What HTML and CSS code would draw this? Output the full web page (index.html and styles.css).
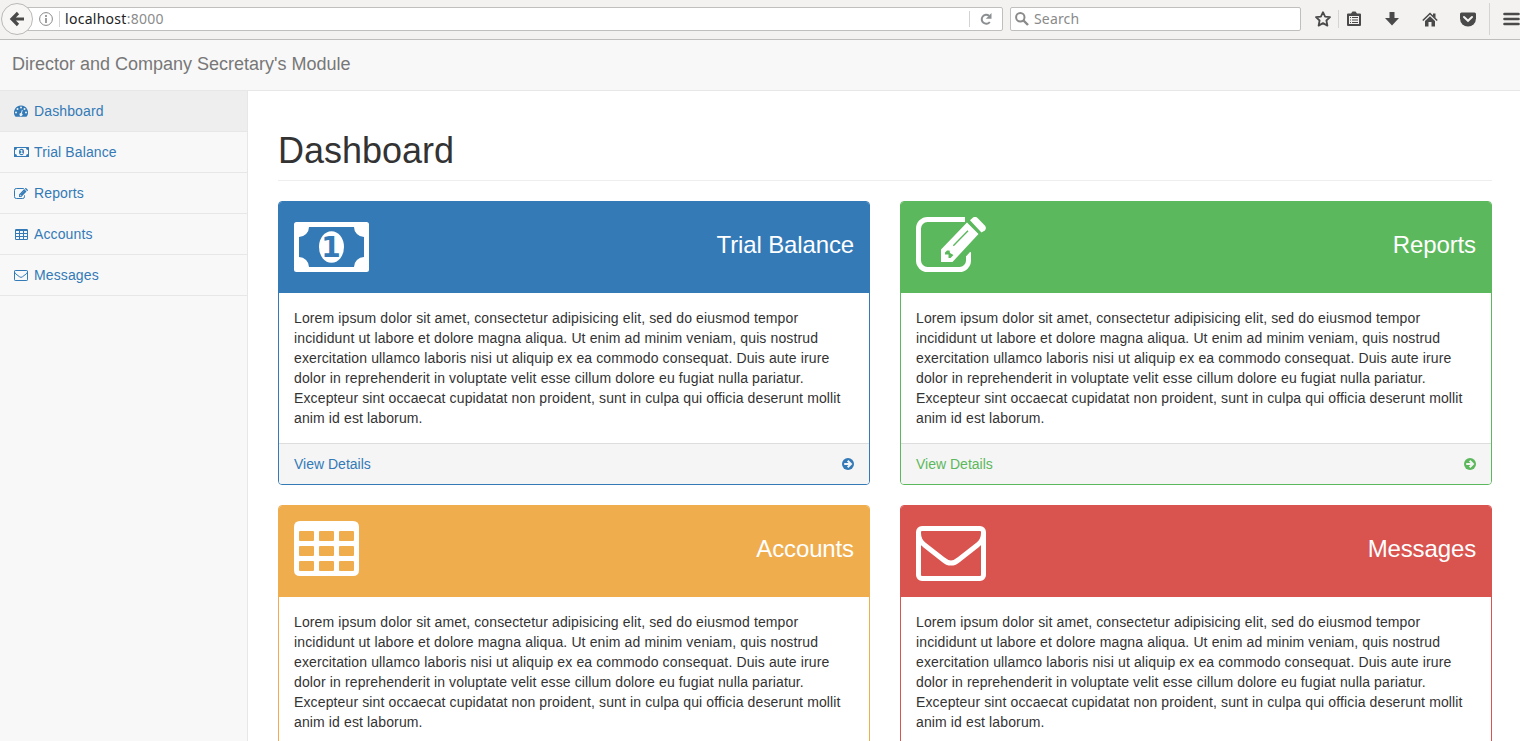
FILE: index.html
```html
<!DOCTYPE html>
<html lang="en">
<head>
<meta charset="utf-8">
<title>Dashboard</title>
<link rel="stylesheet" href="styles.css">
</head>
<body>
<svg class="sprite" aria-hidden="true">
  <symbol id="money" viewBox="0 0 75 50">
    <path fill="currentColor" fill-rule="evenodd" d="M2.500 0H72.500Q75 0 75 2.500V47.500Q75 50 72.500 50H2.500Q0 50 0 47.500V2.500Q0 0 2.500 0ZM15 5A10 10 0 0 1 5 15V35A10 10 0 0 1 15 45H60A10 10 0 0 1 70 35V15A10 10 0 0 1 60 5Z"/>
    <ellipse cx="37.500" cy="25" rx="12.500" ry="15.800" fill="currentColor"/>
  </symbol>
  <symbol id="edit" viewBox="0 0 70 55">
    <path fill="none" stroke="currentColor" stroke-width="5" d="M49 2.500H11.500A9 9 0 0 0 2.500 11.500V43.500A9 9 0 0 0 11.500 52.500H43.500A9 9 0 0 0 52.500 43.500V39"/>
    <path fill="currentColor" d="M50 39.500L54 35Q55 34.500 55 36V40H50Z"/>
    <path fill="currentColor" fill-rule="evenodd" d="M51 5.500L62.500 17L36.500 45H25V32.500ZM31 33.500L29 35.500V37.500H32.500V41H34.500L37.500 38L34 36L33.500 33.500ZM36.800 28.200L37.800 29.200L52.500 14.300L51.500 13.300Z"/>
    <path fill="currentColor" d="M54 3.200L56.500 1Q59-1.200 61.500 1L68.800 8.500Q71 11 68.800 13.500L65.500 15.500Z"/>
  </symbol>
  <symbol id="table" viewBox="0 0 65 55">
    <path fill="currentColor" fill-rule="evenodd" d="M6 0H59Q65 0 65 6V49Q65 55 59 55H6Q0 55 0 49V6Q0 0 6 0ZM6 10Q5 10 5 11V19Q5 20 6 20H19Q20 20 20 19V11Q20 10 19 10ZM26 10Q25 10 25 11V19Q25 20 26 20H39Q40 20 40 19V11Q40 10 39 10ZM46 10Q45 10 45 11V19Q45 20 46 20H59Q60 20 60 19V11Q60 10 59 10ZM6 25Q5 25 5 26V34Q5 35 6 35H19Q20 35 20 34V26Q20 25 19 25ZM26 25Q25 25 25 26V34Q25 35 26 35H39Q40 35 40 34V26Q40 25 39 25ZM46 25Q45 25 45 26V34Q45 35 46 35H59Q60 35 60 34V26Q60 25 59 25ZM6 40Q5 40 5 41V49Q5 50 6 50H19Q20 50 20 49V41Q20 40 19 40ZM26 40Q25 40 25 41V49Q25 50 26 50H39Q40 50 40 49V41Q40 40 39 40ZM46 40Q45 40 45 41V49Q45 50 46 50H59Q60 50 60 49V41Q60 40 59 40Z"/>
  </symbol>
  <symbol id="envelope" viewBox="0 0 70 55">
    <rect x="2.500" y="2.500" width="65" height="50" rx="3.500" fill="none" stroke="currentColor" stroke-width="5"/>
    <path fill="none" stroke="currentColor" stroke-width="5" d="M2.500 7C2.500 12 5 16.500 8.500 19L27 33.500Q35 40.500 43 33.500L61.500 19C65 16.500 67.500 12 67.500 7"/>
  </symbol>
  <symbol id="gauge" viewBox="0 0 14 12">
    <path fill="currentColor" fill-rule="evenodd" d="M7 .500A7 7 0 0 1 12.900 11.300Q12.600 11.700 12.200 11.700H1.800Q1.400 11.700 1.100 11.300A7 7 0 0 1 7 .500ZM2 6.500A1 1 0 0 0 2 8.500A1 1 0 0 0 2 6.500ZM3.500 3A1 1 0 0 0 3.500 5A1 1 0 0 0 3.500 3ZM7 1.500A1 1 0 0 0 7 3.500A1 1 0 0 0 7 1.500ZM10.500 3A1 1 0 0 0 10.500 5A1 1 0 0 0 10.500 3ZM12 6.500A1 1 0 0 0 12 8.500A1 1 0 0 0 12 6.500ZM7.900 4.700L7 8.100A1.500 1.500 0 1 0 7.900 8.400L8.700 4.900Z"/>
  </symbol>
  <symbol id="go" viewBox="0 0 12 12">
    <circle cx="6" cy="6" r="6" fill="currentColor"/>
    <path class="go-arrow" d="M2.200 6H8.500M5.700 2.700L9 6L5.700 9.300"/>
  </symbol>
</svg>

<div class="browser">
  <div class="address">
    <div class="back"><svg width="16" height="16" viewBox="0 0 16 16"><path d="M15 8H4M9 2L3 8L9 14" fill="none" stroke="#4a4a4a" stroke-width="3.200"/></svg></div>
    <svg class="info" width="14" height="14" viewBox="0 0 14 14" fill="none" stroke="#888"><circle cx="7" cy="7" r="6.400"/><path d="M7 3V5M7 6V11" stroke-width="1.600"/></svg>
    <span class="url">localhost<span class="port">:8000</span></span>
    <span class="reload"><svg width="12" height="12" viewBox="0 0 12 12"><path d="M9.800 9A4.500 4.500 0 1 1 9 2.700" fill="none" stroke="#8b8f91" stroke-width="2"/><path d="M11.500 0V5.700H5.800Z" fill="#8b8f91"/></svg></span>
  </div>
  <div class="search"><svg width="14" height="14" viewBox="0 0 14 14" fill="none" stroke="#8a8a8a"><circle cx="5.300" cy="5.300" r="4.200" stroke-width="2"/><path d="M8.500 8.500L13 13" stroke-width="2.400"/></svg>Search</div>
  <div class="tools">
    <svg class="star" width="16" height="16" viewBox="0 0 16 16"><path d="M8 1.200L10.100 5.600L15 6.200L11.400 9.500L12.400 14.600L8 12.100L3.600 14.600L4.600 9.500L1 6.200L5.900 5.600Z" fill="none" stroke="#4a4a4a" stroke-width="1.800" stroke-linejoin="round"/></svg>
    <i class="sep short"></i>
    <svg class="clip" width="14" height="16" viewBox="0 0 14 16"><path fill="#4a4a4a" fill-rule="evenodd" d="M1 2.500H4L5.500 .500H8.500L10 2.500H13Q14 2.500 14 3.500V14Q14 15 13 15H1Q0 15 0 14V3.500Q0 2.500 1 2.500ZM2 5V13H12V5Z"/><path d="M3 6.500H4M5 6.500H11M3 9H4M5 9H11M3 11.500H4M5 11.500H11" stroke="#4a4a4a" stroke-width="1"/></svg>
    <svg class="down" width="14" height="14" viewBox="0 0 14 14"><path d="M4.500 0H9.500V6H14L7 13.500L0 6H4.500Z" fill="#4a4a4a"/></svg>
    <svg class="home" width="16" height="15" viewBox="0 0 16 15"><path d="M.800 8.500L8 1.500L15.200 8.500" fill="none" stroke="#4a4a4a" stroke-width="1.600"/><path d="M11 1.500H13.500V6L11 4Z" fill="#4a4a4a"/><path d="M8 4.200L13 9V14.500H9.500V10H6.500V14.500H3V9Z" fill="#4a4a4a"/></svg>
    <svg class="pocket" width="16" height="15" viewBox="0 0 16 15"><path d="M1.500 .500H14.500Q16 .500 16 2V6.500A8 8 0 0 1 0 6.500V2Q0 .500 1.500 .500Z" fill="#4a4a4a"/><path d="M4 5L8 8.800L12 5" fill="none" stroke="#f5f4f2" stroke-width="2" stroke-linecap="round"/></svg>
    <i class="sep tall"></i>
    <svg class="menu" width="17" height="14" viewBox="0 0 17 14"><path d="M1.500 2H15.500M1.500 7H15.500M1.500 12H15.500" stroke="#4a4a4a" stroke-width="2.600" stroke-linecap="round"/></svg>
  </div>
</div>

<header class="navbar">Director and Company Secretary's Module</header>
<div class="wrapper">
  <nav class="sidebar">
    <a class="item active"><svg width="14" height="12"><use href="#gauge"/></svg>Dashboard</a>
    <a class="item"><svg width="15" height="10" viewBox="0 0 75 50"><use href="#money" width="75" height="50"/><text class="coin" x="37" y="35" text-anchor="middle">1</text></svg>Trial Balance</a>
    <a class="item"><svg width="14" height="11"><use href="#edit"/></svg>Reports</a>
    <a class="item table"><svg width="13" height="11"><use href="#table"/></svg>Accounts</a>
    <a class="item"><svg width="14" height="11"><use href="#envelope"/></svg>Messages</a>
  </nav>
  <main class="content">
    <h1>Dashboard</h1>
    <div class="cards">
      <section class="card blue">
        <div class="heading"><svg class="m5" width="75" height="50" viewBox="0 0 75 50"><use href="#money" width="75" height="50"/><text class="coin" x="37" y="35" text-anchor="middle">1</text></svg><span>Trial Balance</span></div>
        <p>Lorem ipsum dolor sit amet, consectetur adipisicing elit, sed do eiusmod tempor<br>incididunt ut labore et dolore magna aliqua. Ut enim ad minim veniam, quis nostrud<br>exercitation ullamco laboris nisi ut aliquip ex ea commodo consequat. Duis aute irure<br>dolor in reprehenderit in voluptate velit esse cillum dolore eu fugiat nulla pariatur.<br>Excepteur sint occaecat cupidatat non proident, sunt in culpa qui officia deserunt mollit<br>anim id est laborum.</p>
        <div class="footer"><span>View Details</span><svg width="12" height="12"><use href="#go"/></svg></div>
      </section>
      <section class="card green">
        <div class="heading"><svg width="70" height="55"><use href="#edit"/></svg><span>Reports</span></div>
        <p>Lorem ipsum dolor sit amet, consectetur adipisicing elit, sed do eiusmod tempor<br>incididunt ut labore et dolore magna aliqua. Ut enim ad minim veniam, quis nostrud<br>exercitation ullamco laboris nisi ut aliquip ex ea commodo consequat. Duis aute irure<br>dolor in reprehenderit in voluptate velit esse cillum dolore eu fugiat nulla pariatur.<br>Excepteur sint occaecat cupidatat non proident, sunt in culpa qui officia deserunt mollit<br>anim id est laborum.</p>
        <div class="footer"><span>View Details</span><svg width="12" height="12"><use href="#go"/></svg></div>
      </section>
      <section class="card orange">
        <div class="heading"><svg width="65" height="55"><use href="#table"/></svg><span>Accounts</span></div>
        <p>Lorem ipsum dolor sit amet, consectetur adipisicing elit, sed do eiusmod tempor<br>incididunt ut labore et dolore magna aliqua. Ut enim ad minim veniam, quis nostrud<br>exercitation ullamco laboris nisi ut aliquip ex ea commodo consequat. Duis aute irure<br>dolor in reprehenderit in voluptate velit esse cillum dolore eu fugiat nulla pariatur.<br>Excepteur sint occaecat cupidatat non proident, sunt in culpa qui officia deserunt mollit<br>anim id est laborum.</p>
      </section>
      <section class="card red">
        <div class="heading"><svg class="m5" width="70" height="55"><use href="#envelope"/></svg><span>Messages</span></div>
        <p>Lorem ipsum dolor sit amet, consectetur adipisicing elit, sed do eiusmod tempor<br>incididunt ut labore et dolore magna aliqua. Ut enim ad minim veniam, quis nostrud<br>exercitation ullamco laboris nisi ut aliquip ex ea commodo consequat. Duis aute irure<br>dolor in reprehenderit in voluptate velit esse cillum dolore eu fugiat nulla pariatur.<br>Excepteur sint occaecat cupidatat non proident, sunt in culpa qui officia deserunt mollit<br>anim id est laborum.</p>
      </section>
    </div>
  </main>
</div>
</body>
</html>
```

FILE: styles.css
```css
* { box-sizing: border-box; }
body {
  margin: 0;
  height: 741px;
  overflow: hidden;
  display: flex;
  flex-direction: column;
  background: #f8f8f8;
  color: #333;
  font: 14px/20px "Liberation Sans", Arial, sans-serif;
}
svg { display: block; flex: none; }
.sprite { position: absolute; width: 0; height: 0; }

.browser {
  flex: none;
  height: 40px;
  display: flex;
  align-items: flex-start;
  padding-top: 7px;
  background: #f3f2f1;
  border-bottom: 1px solid #bdbdbb;
  font: 14px/22px "Noto Sans", sans-serif;
}
.address, .search {
  height: 24px;
  display: flex;
  align-items: center;
  background: #fff;
  border: 1px solid #bfbfbd;
  border-radius: 2px;
}
.address { width: 987px; margin-left: 16px; }
.back {
  flex: none;
  width: 32px;
  height: 32px;
  margin-left: -16px;
  display: flex;
  align-items: center;
  justify-content: center;
  background: #f7f6f5;
  border: 1px solid #b9b9b7;
  border-radius: 50%;
}
.info { margin-left: 6px; }
.url {
  margin-left: 6px;
  padding-left: 5px;
  border-left: 1px solid #d3d3d3;
  line-height: 16px;
  letter-spacing: .28px;
  color: #222;
}
.port { color: #8c8c8c; }
.reload { margin-left: auto; padding: 2px 10px; border-left: 1px solid #d3d3d3; }
.search { width: 291px; margin-left: 7px; padding-left: 4px; gap: 5px; color: #8a8a8a; letter-spacing: .15px; }
.tools { flex: 1; height: 24px; display: flex; align-items: center; }
.star { margin-left: 14px; }
.sep { width: 1px; background: #d5d4d2; flex: none; }
.short { height: 18px; margin-left: 7px; }
.tall { height: 32px; margin-left: 13px; }
.clip { margin-left: 8px; }
.down { margin-left: 24px; }
.home { margin-left: 23px; }
.pocket { margin-left: 22px; }
.menu { margin-left: 13px; }

.navbar {
  flex: none;
  height: 51px;
  padding: 14px 12px;
  border-bottom: 1px solid #e7e7e7;
  color: #777;
  font-size: 18px;
}
.wrapper { flex: 1; min-height: 0; display: flex; }
.sidebar { width: 247px; flex: none; color: #337ab7; letter-spacing: .12px; }
.item {
  height: 41px;
  display: grid;
  grid-template-columns: 20px 1fr;
  align-items: center;
  padding-left: 14px;
  border-bottom: 1px solid #e7e7e7;
}
.item.table svg { margin-left: 1px; }
.active { background: #eee; }
.content {
  flex: 1;
  padding: 0 28px 0 30px;
  background: #fff;
  border-left: 1px solid #e7e7e7;
}
h1 {
  margin: 40px 0 20px;
  padding-bottom: 9px;
  border-bottom: 1px solid #eee;
  font-size: 36px;
  line-height: 40px;
  font-weight: 400;
}
.cards { display: grid; grid-template-columns: 592px 592px; gap: 20px 30px; }
.card {
  --tone: #337ab7;
  border: 1px solid var(--tone);
  border-radius: 4px;
  overflow: hidden;
  background: #fff;
}
.green { --tone: #5cb85c; }
.orange { --tone: #f0ad4e; }
.red { --tone: #d9534f; }
.heading {
  height: 91px;
  display: flex;
  justify-content: space-between;
  padding: 15px 15px 0;
  background: var(--tone);
  color: #fff;
}
.heading span { font-size: 24px; line-height: 26px; margin-top: 15px; letter-spacing: -.13px; }
.m5 { margin-top: 5px; }
.coin { font: bold 28px "DejaVu Sans", sans-serif; letter-spacing: 0; fill: #337ab7; }
.item .coin { fill: #f8f8f8; }
.item .coin { stroke: none; }
.card p { margin: 0; padding: 15px; white-space: nowrap; letter-spacing: .128px; }
.footer {
  display: flex;
  justify-content: space-between;
  align-items: center;
  padding: 10px 15px;
  background: #f5f5f5;
  border-top: 1px solid #ddd;
  color: var(--tone);
}
.go-arrow { fill: none; stroke: #f5f5f5; stroke-width: 2; }
```
